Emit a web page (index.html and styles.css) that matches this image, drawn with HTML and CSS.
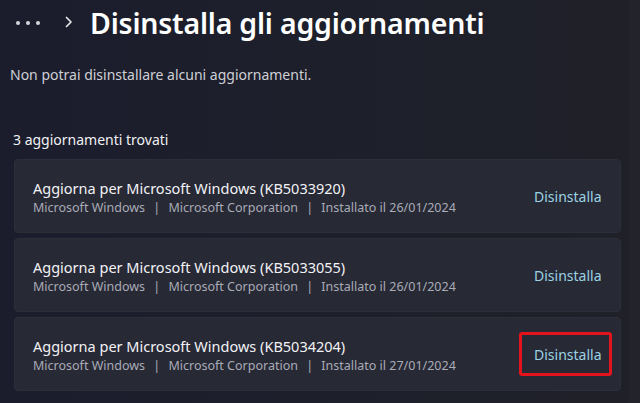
FILE: index.html
```html
<!DOCTYPE html>
<html lang="it">
<head>
<meta charset="utf-8">
<title>Disinstalla gli aggiornamenti</title>
<link rel="stylesheet" href="styles.css">
</head>
<body>
<div class="page">
  <header class="header">
    <span class="dots"><i></i><i></i><i></i></span>
    <svg class="chevron" width="8" height="12" viewBox="0 0 8 12"><path d="M1.5 1.5 L6 6 L1.5 10.5" fill="none" stroke="#e6e6ea" stroke-width="1.7" stroke-linecap="round" stroke-linejoin="round"/></svg>
    <h1 class="title">Disinstalla gli aggiornamenti</h1>
  </header>
  <p class="note">Non potrai disinstallare alcuni aggiornamenti.</p>
  <p class="count">3 aggiornamenti trovati</p>
  <div class="list">
    <div class="card">
      <div class="info">
        <div class="name">Aggiorna per Microsoft Windows (KB5033920)</div>
        <div class="meta">Microsoft Windows <span class="sep">|</span> Microsoft Corporation <span class="sep">|</span> Installato il 26/01/2024</div>
      </div>
      <button class="uninstall">Disinstalla</button>
    </div>
    <div class="card">
      <div class="info">
        <div class="name">Aggiorna per Microsoft Windows (KB5033055)</div>
        <div class="meta">Microsoft Windows <span class="sep">|</span> Microsoft Corporation <span class="sep">|</span> Installato il 26/01/2024</div>
      </div>
      <button class="uninstall">Disinstalla</button>
    </div>
    <div class="card">
      <div class="info">
        <div class="name">Aggiorna per Microsoft Windows (KB5034204)</div>
        <div class="meta">Microsoft Windows <span class="sep">|</span> Microsoft Corporation <span class="sep">|</span> Installato il 27/01/2024</div>
      </div>
      <button class="uninstall highlighted">Disinstalla</button>
    </div>
  </div>
</div>
</body>
</html>
```
FILE: styles.css
```css
* { box-sizing: border-box; }
html, body { margin: 0; padding: 0; }
body {
  width: 640px;
  height: 403px;
  overflow: hidden;
  background: linear-gradient(90deg, #1b1d2d 0%, #1d1f2b 50%, #1f2028 98%, #23242b 98.5%);
  font-family: "Noto Sans", "Open Sans", sans-serif;
  color: #ffffff;
}
.page {
  padding: 0 19px 0 0;
}
.header {
  display: flex;
  align-items: center;
  height: 46px;
  padding-left: 16px;
}
.dots {
  display: flex;
  gap: 6px;
  width: 24px;
}
.dots i {
  display: block;
  width: 4px;
  height: 4px;
  border-radius: 50%;
  background: #d6d7de;
}
.chevron {
  margin-left: 25px;
  margin-top: -2px;
}
.title {
  margin: 0 0 0 17px;
  font-size: 28.5px;
  font-weight: 600;
  letter-spacing: -0.2px;
  color: #ffffff;
  line-height: 40px;
}
.note {
  margin: 19px 0 0 10px;
  font-size: 14px;
  line-height: 20px;
  color: #cfd0d6;
}
.count {
  margin: 45px 0 0 13px;
  font-size: 14px;
  line-height: 20px;
  color: #f0f0f3;
}
.list {
  margin: 9px 0 0 14px;
  display: flex;
  flex-direction: column;
  gap: 5px;
}
.card {
  display: flex;
  align-items: center;
  justify-content: space-between;
  height: 74px;
  padding: 0 8px 0 18px;
  background: #272935;
  border-radius: 4px;
  border: 1px solid #2c2e3a;
}
.info {
  padding-top: 3px;
}
.name {
  font-size: 14.5px;
  line-height: 19px;
  color: #f2f2f5;
}
.meta {
  font-size: 12.5px;
  line-height: 19px;
  color: #a9abb5;
}
.sep {
  margin: 0 5px;
}
.uninstall {
  font-family: inherit;
  font-size: 14px;
  color: #9dd2e3;
  background: transparent;
  border: 3px solid transparent;
  border-radius: 3px;
  height: 44px;
  width: 93px;
  padding: 0 8px 0 12px;
  text-align: left;
}
.uninstall.highlighted {
  border-color: #e3141d;
}
```
